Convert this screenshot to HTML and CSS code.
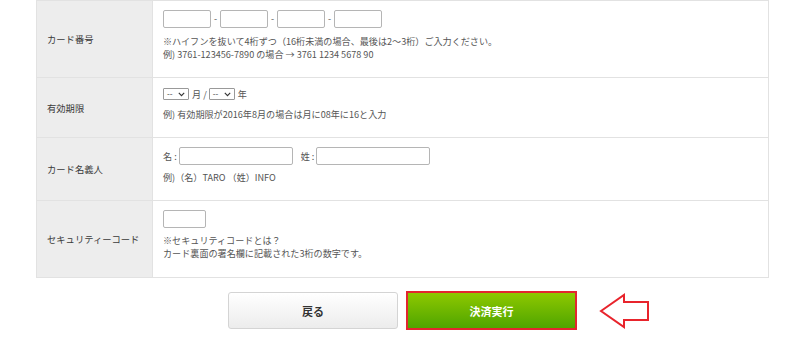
FILE: index.html
```html
<!DOCTYPE html>
<html lang="ja">
<head>
<meta charset="utf-8">
<link rel="stylesheet" href="styles.css">
</head>
<body>
<div class="page">
  <table class="form">
    <tr class="r1">
      <th>カード番号</th>
      <td>
        <div class="field">
          <span class="box card"></span><span class="dash">-</span>
          <span class="box card"></span><span class="dash">-</span>
          <span class="box card"></span><span class="dash">-</span>
          <span class="box card"></span>
        </div>
        <p class="note">※ハイフンを抜いて4桁ずつ（16桁未満の場合、最後は2〜3桁）ご入力ください。<br>例) 3761-123456-7890 の場合 → 3761 1234 5678 90</p>
      </td>
    </tr>
    <tr class="r2">
      <th>有効期限</th>
      <td>
        <div class="field sel-line">
          <span class="sel">--<svg width="7" height="5" viewBox="0 0 7 5"><path d="M0.8 0.8 L3.5 3.6 L6.2 0.8" fill="none" stroke="#333" stroke-width="1.1"/></svg></span><span class="unit">月 /</span>
          <span class="sel">--<svg width="7" height="5" viewBox="0 0 7 5"><path d="M0.8 0.8 L3.5 3.6 L6.2 0.8" fill="none" stroke="#333" stroke-width="1.1"/></svg></span><span class="unit">年</span>
        </div>
        <p class="note n2">例) 有効期限が2016年8月の場合は月に08年に16と入力</p>
      </td>
    </tr>
    <tr class="r3">
      <th>カード名義人</th>
      <td>
        <div class="field">
          <span class="lbl">名 :</span><span class="box name"></span>
          <span class="lbl l2">姓 :</span><span class="box name"></span>
        </div>
        <p class="note n3">例)（名）TARO （姓）INFO</p>
      </td>
    </tr>
    <tr class="r4">
      <th>セキュリティーコード</th>
      <td>
        <div class="field">
          <span class="box cvv"></span>
        </div>
        <p class="note n3">※セキュリティコードとは？<br>カード裏面の署名欄に記載された3桁の数字です。</p>
      </td>
    </tr>
  </table>
  <div class="actions">
    <button class="btn back">戻る</button>
    <div class="submit-wrap">
      <button class="btn submit">決済実行</button>
      <svg class="arrow" width="52" height="38" viewBox="0 0 52 38">
        <path d="M2 19 L25 3 L25 10 L49 10 L49 28 L25 28 L25 35 Z" fill="#fff" stroke="#e8242c" stroke-width="2" stroke-linejoin="miter"/>
      </svg>
    </div>
  </div>
</div>
</body>
</html>
```

FILE: styles.css
```css
* { box-sizing: border-box; }
html, body { margin: 0; padding: 0; background: #fff; }
body {
  font-family: "Noto Sans CJK JP", "Noto Sans", sans-serif;
  color: #444;
  font-size: 9.1px;
}
.page { width: 800px; padding: 0 31px 0 36px; }
.form {
  width: 733px;
  border-collapse: collapse;
  border-top: 1px solid #e2e2e2;
}
.form th, .form td {
  border: 1px solid #e2e2e2;
  border-top: none;
  vertical-align: middle;
}
.form th {
  width: 116px;
  background: #ededed;
  text-align: left;
  font-weight: normal;
  padding: 0 0 0 10px;
  color: #3a3a3a;
  font-size: 9.3px;
}
.form td {
  padding: 9px 10px 16px 10px;
  vertical-align: top;
}
.r2 td { padding-top: 10px; }
.r4 td { padding-bottom: 17px; }
.field {
  display: flex;
  align-items: center;
  height: 18px;
  color: #555;
}
.sel-line { height: 12px; }
.box {
  display: inline-block;
  height: 18px;
  border: 1px solid #b5b5b5;
  border-radius: 2px;
  background: #fff;
}
.card { width: 48px; }
.dash { width: 9px; text-align: center; font-size: 9px; line-height: 18px; }
.name { width: 114px; }
.cvv { width: 43px; height: 18px; }
.lbl { margin-right: 2px; font-size: 9.1px; }
.l2 { margin-left: 8px; margin-right: 2px; }
.sel {
  display: inline-flex;
  align-items: center;
  justify-content: space-between;
  width: 26px;
  height: 12px;
  border: 1px solid #999;
  border-radius: 1px;
  padding: 0 3px 0 3px;
  font-size: 8px;
  line-height: 10px;
  color: #333;
  background: #fff;
}
.unit { margin: 0 2px 0 3px; font-size: 9.1px; color: #555; }
.note {
  margin: 7px 0 0 0;
  line-height: 13px;
  color: #555;
  font-size: 9.1px;
}
.n2 { margin-top: 8px; }
.n3 { margin-top: 6px; }
.actions {
  display: flex;
  justify-content: center;
  align-items: center;
  gap: 8px;
  padding-top: 13px;
  width: 733px;
}
.btn {
  font-family: "Noto Sans CJK JP", "Noto Sans", sans-serif;
  font-weight: bold;
  font-size: 11px;
  cursor: pointer;
}
.back {
  width: 170px;
  height: 37px;
  border: 1px solid #d4d4d4;
  border-radius: 3px;
  background: linear-gradient(#ffffff, #ececec);
  color: #333;
}
.submit-wrap { position: relative; }
.submit {
  display: block;
  width: 171px;
  height: 39px;
  border: 2px solid #e3262f;
  border-radius: 0;
  background: linear-gradient(#8ec800, #4fa500);
  color: #fff;
}
.arrow {
  position: absolute;
  left: 193px;
  top: 1px;
}
```
